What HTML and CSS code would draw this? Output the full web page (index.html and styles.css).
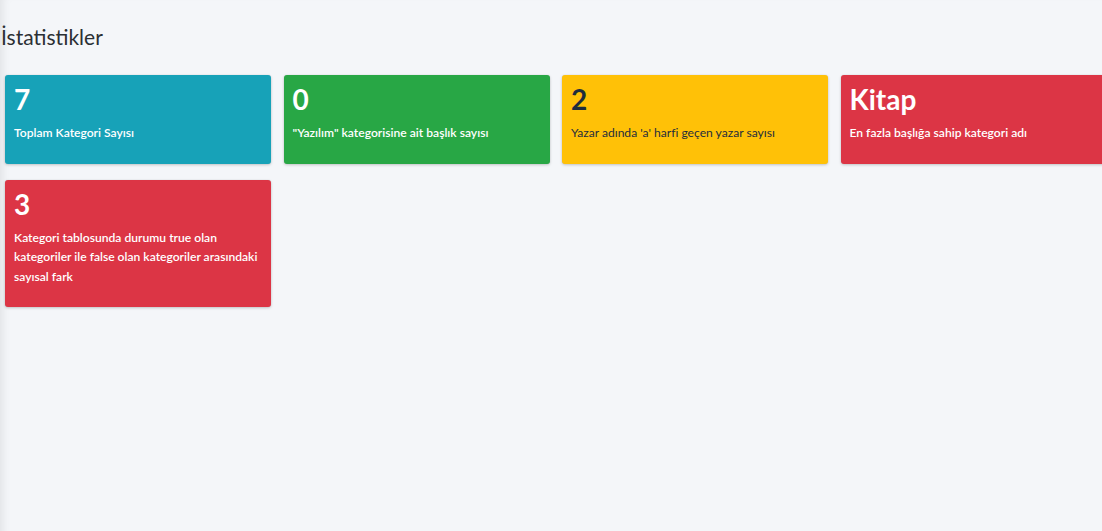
FILE: index.html
```html
<!DOCTYPE html>
<html lang="tr">
<head>
<meta charset="utf-8">
<title>İstatistikler</title>
<link rel="stylesheet" href="styles.css">
</head>
<body>
<div class="page">
  <h1 class="title">İstatistikler</h1>
  <div class="grid">
    <div class="box box-info">
      <h3>7</h3>
      <p>Toplam Kategori Sayısı</p>
    </div>
    <div class="box box-success">
      <h3>0</h3>
      <p>"Yazılım" kategorisine ait başlık sayısı</p>
    </div>
    <div class="box box-warning">
      <h3>2</h3>
      <p>Yazar adında 'a' harfi geçen yazar sayısı</p>
    </div>
    <div class="box box-danger">
      <h3>Kitap</h3>
      <p>En fazla başlığa sahip kategori adı</p>
    </div>
    <div class="box box-danger">
      <h3>3</h3>
      <p>Kategori tablosunda durumu true olan kategoriler ile false olan kategoriler arasındaki sayısal fark</p>
    </div>
  </div>
</div>
</body>
</html>
```

FILE: styles.css
```css
html, body {
  margin: 0;
  padding: 0;
  background: #f4f6f9;
  overflow: hidden;
}
body {
  font-family: Lato, "Liberation Sans", sans-serif;
  color: #212529;
}
.page {
  min-height: 531px;
  box-shadow: inset 9px 0 8px -6px rgba(0, 0, 0, 0.08);
  padding: 20px 0 0 0;
}
.title {
  margin: 0 0 0 1px;
  font-size: 21px;
  font-weight: 400;
  line-height: 34px;
  color: #2b2f33;
}
.grid {
  display: grid;
  grid-template-columns: repeat(4, 266px);
  column-gap: 12.5px;
  row-gap: 16px;
  margin: 21px 0 0 5px;
  width: 1110px;
  align-items: start;
}
.box {
  border-radius: 3px;
  box-shadow: 0 0 1px rgba(0, 0, 0, .125), 0 1px 3px rgba(0, 0, 0, .2);
  padding: 7px 8px 11px 9px;
  color: #fff;
}
.box h3 {
  margin: 0 0 7px 0;
  font-size: 28px;
  line-height: 34px;
  font-weight: 700;
}
.box p {
  margin: 0 0 10px 0;
  font-size: 12.1px;
  line-height: 19.5px;
  font-weight: 600;
}
.box-info { background: #17a2b8; }
.box-success { background: #28a745; }
.box-warning { background: #ffc107; color: #1f2d3d; }
.box-warning p { font-weight: 400; }
.box-danger { background: #dc3545; }
```
